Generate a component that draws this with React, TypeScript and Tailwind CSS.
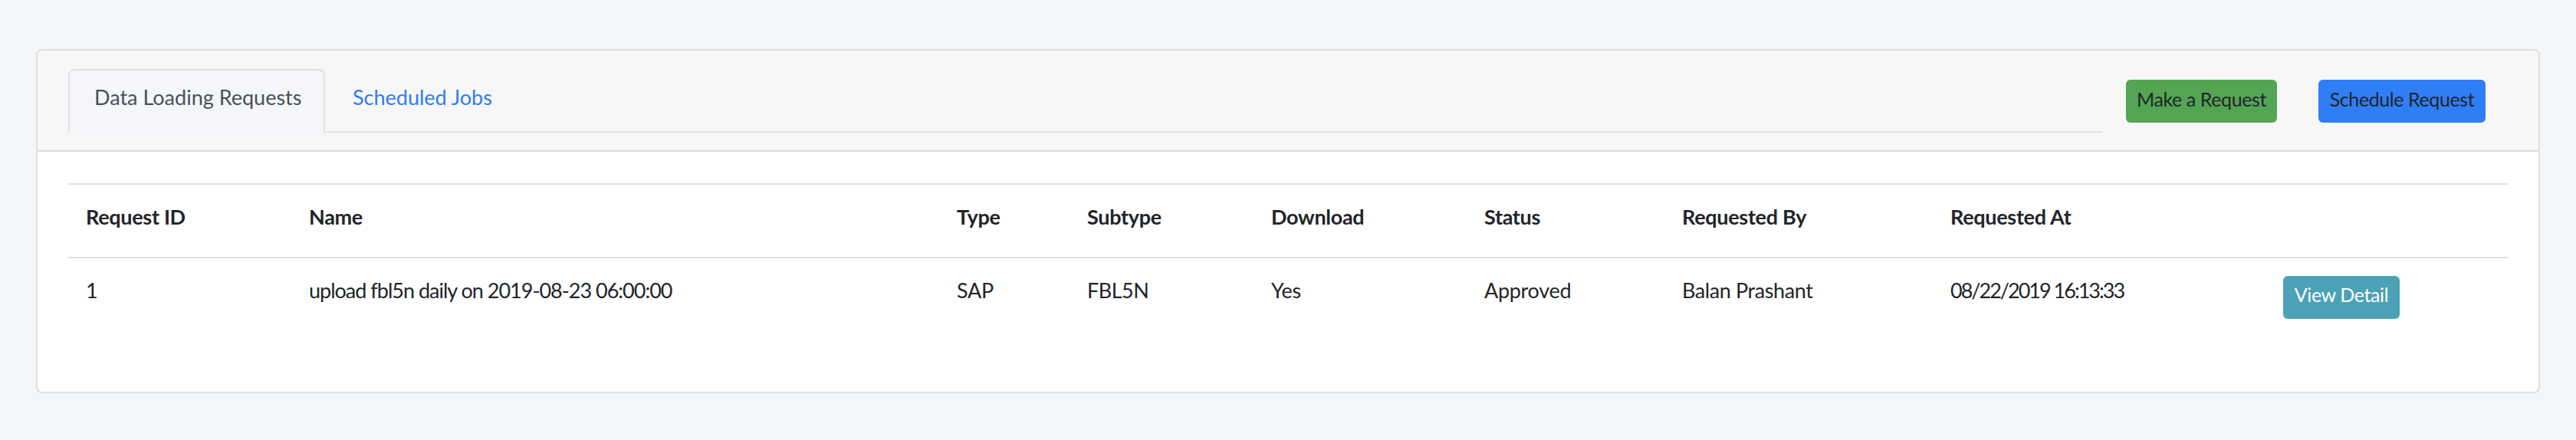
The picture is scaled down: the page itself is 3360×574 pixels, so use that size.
import React from "react";

const cols = [291, 845, 170, 240, 278, 258, 350, 434, 318];

export default function App() {
  const headers = [
    "Request ID",
    "Name",
    "Type",
    "Subtype",
    "Download",
    "Status",
    "Requested By",
    "Requested At",
    "",
  ];
  const row: { text: string; cls: string }[] = [
    { text: "1", cls: "tracking-[-0.3px]" },
    { text: "upload fbl5n daily on 2019-08-23 06:00:00", cls: "tracking-[-1px]" },
    { text: "SAP", cls: "tracking-[-0.3px]" },
    { text: "FBL5N", cls: "tracking-[-0.5px]" },
    { text: "Yes", cls: "tracking-[-0.3px]" },
    { text: "Approved", cls: "tracking-[-0.3px]" },
    { text: "Balan Prashant", cls: "tracking-[-0.4px]" },
    { text: "08/22/2019 16:13:33", cls: "tracking-[-2px]" },
  ];
  return (
    <div className="min-h-[574px] w-full bg-[#f3f6f9] px-[47px] pt-[64px] font-['Lato',sans-serif] text-[#212529]">
      <div className="overflow-hidden rounded-[8px] border-2 border-[#dfdfdf] bg-white">
        {/* Card header */}
        <div className="flex items-start border-b-2 border-[#dcdcdc] bg-[#f7f7f7] pl-[40px] pt-[24px] pb-[23px]">
          <div className="flex h-[83px] w-[2653px] items-start border-b-2 border-[#dee2e6]">
            <div className="h-[83px] w-[335px] rounded-t-[8px] border-2 border-b-0 border-[#dee2e6] bg-[#f4f6f9] pl-[32px] pt-[14px] text-[27px] leading-[42px] whitespace-nowrap text-[#495057]">
              Data Loading Requests
            </div>
            <div className="h-[83px] border-2 border-b-0 border-transparent pl-[34px] pr-[32px] pt-[14px] text-[27px] leading-[42px] whitespace-nowrap text-[#2f7cf6]">
              Scheduled Jobs
            </div>
          </div>
          <div className="ml-[31px] mt-[14px] flex gap-[54px]">
            <button className="h-[56px] w-[197px] rounded-[6px] bg-[#53a553] pb-[7px] text-center text-[25px] leading-[30px] tracking-[-0.4px] whitespace-nowrap text-[#212529]">
              Make a Request
            </button>
            <button className="h-[56px] w-[218px] rounded-[6px] bg-[#2f7ef6] pb-[7px] text-center text-[25px] leading-[30px] tracking-[-0.4px] whitespace-nowrap text-[#212529]">
              Schedule Request
            </button>
          </div>
        </div>
        {/* Card body */}
        <div className="px-[39px] pt-[41px] pb-[39px]">
          <table className="mb-[32px] w-full table-fixed border-collapse text-left">
            <colgroup>
              {cols.map((w, i) => (
                <col key={i} style={{ width: w }} />
              ))}
            </colgroup>
            <thead>
              <tr>
                {headers.map((h, i) => (
                  <th
                    key={i}
                    className="border-t-2 border-b-2 border-[#dee2e6] px-[24px] pt-[20px] pb-[30px] align-top text-[27px] font-bold leading-[44px] tracking-[-0.3px] whitespace-nowrap"
                  >
                    {h}
                  </th>
                ))}
              </tr>
            </thead>
            <tbody>
              <tr>
                {row.map((c, i) => (
                  <td
                    key={i}
                    className={`px-[24px] pt-[21px] align-top text-[27px] leading-[42px] whitespace-nowrap ${c.cls}`}
                  >
                    {c.text}
                  </td>
                ))}
                <td className="px-[24px] pt-[23px] pb-[24px] align-top">
                  <button className="h-[56px] w-[152px] rounded-[6px] bg-[#4ba2b6] pb-[8px] text-center text-[25px] leading-[30px] tracking-[-0.4px] whitespace-nowrap text-white">
                    View Detail
                  </button>
                </td>
              </tr>
            </tbody>
          </table>
        </div>
      </div>
    </div>
  );
}
